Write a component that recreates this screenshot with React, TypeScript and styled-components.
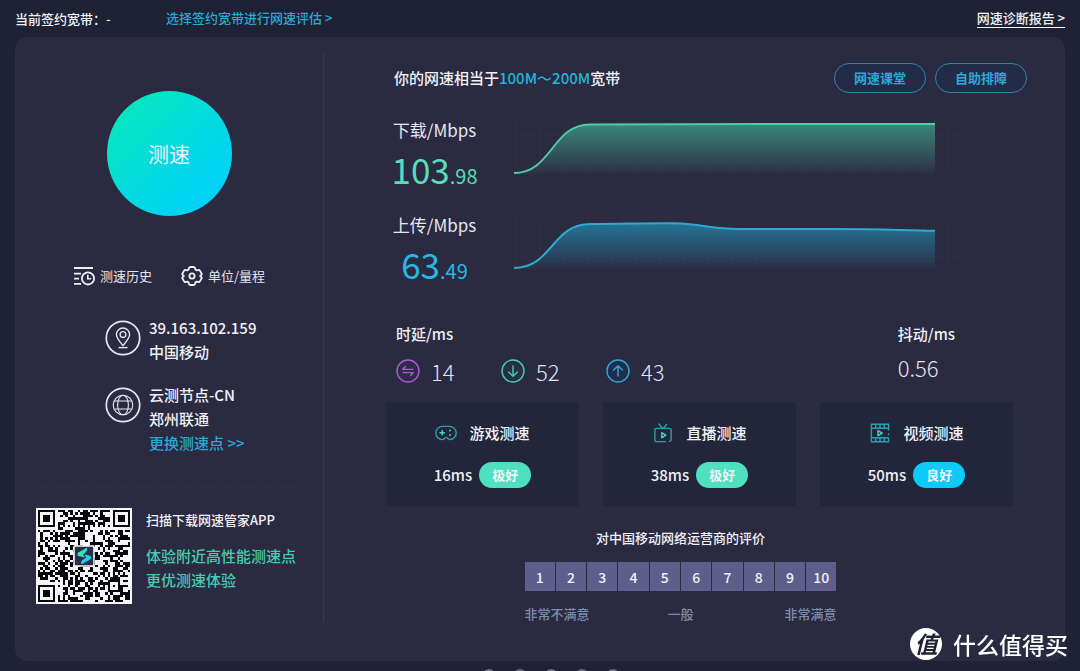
import React from "react";
import styled, { createGlobalStyle } from "styled-components";

const GlobalStyle = createGlobalStyle`
  * { box-sizing: border-box; }
  body {
    margin: 0;
    background: #1e2234;
    color: #f1f2f8;
    font-family: "Noto Sans CJK SC", "Noto Sans", sans-serif;
    font-size: 15px;
    line-height: 24px;
  }
  button, input { font: inherit; color: inherit; }
  a { color: inherit; text-decoration: none; }
  p, h1, h2, h3, fieldset { margin: 0; padding: 0; border: 0; font-size: inherit; font-weight: 400; }
  svg { display: block; flex: none; }
`;

const Page = styled.div`
  display: flex;
  flex-direction: column;
  min-height: 100vh;
`;

const TopBar = styled.header`
  display: flex;
  align-items: center;
  height: 37px;
  padding: 0 15px;
  font-size: 13px;
  font-weight: 500;
`;

const Contract = styled.span`
  width: 151px;
`;

const TopLink = styled.a<{ $report?: boolean }>`
  color: ${(p) => (p.$report ? "#f1f2f8" : "#2ba9d6")};
  margin-left: ${(p) => (p.$report ? "auto" : "0")};
  line-height: 18px;
  border-bottom: 1px solid ${(p) => (p.$report ? "#f1f2f8" : "transparent")};
`;

const Panel = styled.main`
  display: flex;
  flex: 1;
  margin: 0 15px;
  border-radius: 12px;
  background: #2a2a41;
`;

const Side = styled.aside`
  display: flex;
  flex-direction: column;
  align-items: center;
  flex: none;
  width: 309px;
  margin: 15px 0 39px;
  padding-top: 39px;
  border-right: 1px solid #37384f;
`;

const StartButton = styled.button`
  width: 125px;
  height: 125px;
  padding: 0 0 2px;
  border: 0;
  border-radius: 50%;
  background: linear-gradient(135deg, #07e4c4 18%, #00d3f4 78%);
  font-size: 21px;
`;

const Tools = styled.div`
  display: flex;
  gap: 29px;
  margin-top: 50px;
`;

const ToolButton = styled.button`
  display: flex;
  align-items: center;
  gap: 5px;
  padding: 0;
  border: 0;
  background: none;
  font-size: 13px;
  line-height: 20px;
  color: #e4e5ee;
`;

const InfoList = styled.div`
  display: flex;
  flex-direction: column;
  align-self: stretch;
  gap: 19px;
  margin-top: 30px;
  padding-left: 90px;
`;

const InfoItem = styled.div`
  display: flex;
  gap: 8px;
  font-weight: 500;
  > svg { margin-top: 4px; }
  p { font-weight: 500; }
`;

const InfoLink = styled.a`
  display: block;
  color: #2ba9d6;
`;

const Divider = styled.hr`
  align-self: stretch;
  margin: 31px 26px 21px 20px;
  border: 0;
  border-top: 1px dashed #323249;
`;

const AppPromo = styled.div`
  display: flex;
  align-self: stretch;
  gap: 14px;
  padding-left: 21px;
  color: #45cdaf;
  p { font-weight: 500; }
`;

const PromoTitle = styled.h2`
  margin-bottom: 12px;
  color: #f1f2f8;
  font-size: 13px;
  font-weight: 500;
`;

const Results = styled.section`
  flex: 1;
  min-width: 0;
  padding: 26px 38px 37px 62px;
`;

const ResultsHead = styled.div`
  display: flex;
  align-items: center;
  gap: 9px;
  padding-left: 8px;
`;

const Summary = styled.h1`
  flex: 1;
  font-weight: 500;
  em { font-style: normal; color: #22b4dc; }
`;

const OutlineButton = styled.button`
  width: 92px;
  height: 30px;
  padding: 0;
  border: 1px solid #2f86ab;
  border-radius: 15px;
  background: #222c47;
  color: #2fa8d8;
  font-size: 13px;
  font-weight: 700;
  line-height: 20px;
`;

const Speeds = styled.div`
  display: flex;
  flex-direction: column;
  gap: 24px;
  margin: 25px 64px 0 0;
`;

const SpeedRow = styled.div`
  display: flex;
  gap: 31px;
`;

const Speed = styled.div`
  width: 97px;
  text-align: center;
  h3 { font-size: 17px; color: #e6e7f0; }
`;

const SpeedValue = styled.p<{ $color: string }>`
  margin-top: 7px;
  color: ${(p) => p.$color};
  font-size: 35px;
  line-height: 40px;
  small { font-size: 20px; line-height: 20px; }
`;

const ChartBox = styled.div`
  flex: 1;
  min-width: 0;
  padding-top: 4px;
  svg { width: 100%; height: 53px; }
`;

const Stats = styled.div`
  display: flex;
  justify-content: space-between;
  margin: 38px 14px 0 0;
  padding: 0 58px 0 10px;
`;

const StatTitle = styled.h2`
  font-weight: 500;
`;

const Pings = styled.div`
  display: flex;
  margin-top: 13px;
`;

const Ping = styled.div`
  display: flex;
  align-items: center;
  gap: 11px;
  width: 105px;
`;

const BigNumber = styled.span`
  color: #e2e4f2;
  font-size: 22px;
  font-weight: 300;
`;

const Jitter = styled.p`
  margin-top: 9px;
`;

const Cards = styled.div`
  display: grid;
  grid-template-columns: repeat(3, 1fr);
  gap: 24px;
  margin: 19px 14px 0 0;
`;

const Card = styled.article`
  display: flex;
  flex-direction: column;
  align-items: center;
  gap: 17px;
  padding: 19px 0 18px;
  border-radius: 2px;
  background: #22263a;
`;

const CardTitle = styled.h3`
  display: flex;
  align-items: center;
  gap: 12px;
  font-weight: 500;
`;

const CardResult = styled.p`
  display: flex;
  align-items: center;
  gap: 7px;
  font-weight: 500;
`;

const Badge = styled.span<{ $good?: boolean }>`
  width: 52px;
  border-radius: 13px;
  background: ${(p) => (p.$good ? "#0ccaf9" : "#4fe0c0")};
  font-size: 13px;
  font-weight: 700;
  line-height: 26px;
  text-align: center;
`;

const Rating = styled.fieldset`
  width: 312px;
  margin: 22px auto 0;
  font-size: 13px;
  line-height: 20px;
`;

const RatingWrap = styled.div`
  padding-right: 52px;
`;

const RatingTitle = styled.legend`
  width: 100%;
  padding: 0;
  text-align: center;
  font-weight: 500;
`;

const Scale = styled.div`
  display: grid;
  grid-template-columns: repeat(10, 1fr);
  gap: 1px;
  margin-top: 14px;
`;

const Score = styled.button`
  height: 29px;
  padding: 0;
  border: 0;
  background: #5d5e8a;
  font-size: 14px;
  font-weight: 500;
`;

const ScaleLabels = styled.div`
  display: grid;
  grid-template-columns: 1fr auto 1fr;
  margin-top: 13px;
  color: #7c8cab;
  font-weight: 500;
  span:last-child { text-align: right; }
`;

const Footer = styled.footer`
  display: flex;
  justify-content: center;
  gap: 17px;
  height: 10px;
  padding: 8px 0 0 22px;
  overflow: hidden;
`;

const Dot = styled.span`
  width: 14px;
  height: 14px;
  border-radius: 50%;
  background: #686b7c;
`;

const Brand = styled.div`
  position: fixed;
  right: 12px;
  bottom: 11px;
  display: flex;
  align-items: center;
  gap: 11px;
  color: #fff;
  font-size: 23px;
  font-weight: 500;
  line-height: 32px;
`;

const BrandMark = styled.span`
  width: 32px;
  height: 32px;
  border-radius: 50%;
  background: #fff;
  color: #1f2030;
  font-weight: 700;
  font-style: italic;
  line-height: 30px;
  text-align: center;
`;

const HistoryIcon = () => (
  <svg width="22" height="20" viewBox="0 0 22 20" fill="none" stroke="#eeeef5" strokeWidth="1.8">
    <path d="M1 2H20M1 7.6H8M1 12.6H6M1 17.8H8" />
    <circle cx="15" cy="12.4" r="6.1" />
    <path d="M14.8 8.8V12.8H18.2" strokeWidth="1.6" />
  </svg>
);

const GearIcon = () => (
  <svg width="22" height="20" viewBox="0 0 22 20" fill="none" stroke="#eeeef5" strokeWidth="1.8" strokeLinejoin="round">
    <path d="M8.3 1.3L9.2 1H12.8L13.7 1.3L14.4 3.6L15.8 4.4L18.2 3.9L18.9 4.6L20.7 7.7L20.8 8.4L19.1 10L20.8 11.6L20.7 12.3L18.9 15.4L18.2 16.1L15.8 15.6L14.4 16.4L13.7 18.7L12.8 19H9.2L8.3 18.7L7.6 16.4L6.2 15.6L3.8 16.1L3.1 15.4L1.3 12.3L1.2 11.6L2.9 10L1.2 8.4L1.3 7.7L3.1 4.6L3.8 3.9L6.2 4.4L7.6 3.6Z" />
    <circle cx="11" cy="10" r="2.6" />
  </svg>
);

const PinIcon = () => (
  <svg width="36" height="36" viewBox="0 0 36 36" fill="none" stroke="#e6e7f2">
    <circle cx="18" cy="18" r="16.7" strokeWidth="1.7" />
    <path d="M18 25.6C14.8 21.8 11.4 18.2 11.4 14.6A6.6 6.6 0 0 1 24.6 14.6C24.6 18.2 21.2 21.8 18 25.6Z" strokeWidth="1.3" />
    <circle cx="18" cy="14.6" r="2.9" strokeWidth="1.3" />
    <path d="M13.5 27.6H22.5" strokeWidth="1.4" />
  </svg>
);

const GlobeIcon = () => (
  <svg width="36" height="36" viewBox="0 0 36 36" fill="none" stroke="#e6e7f2">
    <circle cx="18" cy="18" r="16.7" strokeWidth="1.7" />
    <g strokeWidth="1.1">
      <circle cx="18" cy="18" r="9.8" />
      <ellipse cx="18" cy="18" rx="5.4" ry="9.8" />
      <path d="M9.4 14H26.6M9.4 22H26.6" />
    </g>
  </svg>
);

const QR_SIZE = 37;

const marker = (x: number, y: number, cx: number, cy: number, outer: number) => {
  const d = Math.max(Math.abs(x - cx), Math.abs(y - cy));
  if (d > outer) return null;
  return outer === 4 ? d === 3 || d <= 1 : d !== 1;
};

const qrPath = () => {
  let seed = 77123;
  let path = "";
  for (let y = 0; y < QR_SIZE; y++) {
    for (let x = 0; x < QR_SIZE; x++) {
      seed ^= seed << 13;
      seed ^= seed >>> 17;
      seed ^= seed << 5;
      const fixed =
        marker(x, y, 3, 3, 4) ??
        marker(x, y, 33, 3, 4) ??
        marker(x, y, 3, 33, 4) ??
        marker(x, y, 30, 30, 2);
      const timing = x === 6 || y === 6 ? (x + y) % 2 === 0 : null;
      if (fixed ?? timing ?? (seed >>> 8) % 100 < 52) path += `M${x} ${y}h1v1h-1z`;
    }
  }
  return path;
};

const QrCode = () => (
  <svg width="96" height="96" viewBox="-0.8 -0.8 38.6 38.6" role="img" aria-label="QR">
    <rect x="-0.8" y="-0.8" width="38.6" height="38.6" fill="#f6f6f8" />
    <path d={qrPath()} fill="#08080c" shapeRendering="crispEdges" />
    <rect x="14.2" y="14.2" width="8.6" height="8.6" rx="0.6" fill="#f6f6f8" />
    <rect x="14.8" y="14.8" width="7.4" height="7.4" rx="0.4" fill="#2a3046" />
    <path d="M19.6 15.2L16.4 17C15.5 17.6 15.7 18.4 16.6 18.6L19 19.1L18 18L19.2 17C19.9 16.4 19.9 15.8 19.6 15.2Z" fill="#2fe0c4" />
    <path d="M17.6 21.8L20.8 20C21.7 19.4 21.5 18.5 20.6 18.3L18.6 17.9L19.4 19.2L17.9 20.1C17.2 20.6 17.2 21.3 17.6 21.8Z" fill="#26cdea" />
  </svg>
);

interface ChartProps {
  id: string;
  line: string;
  stroke: string;
  fill: string;
}

const gridX = Array.from({ length: 38 }, (_, i) => i * 12 + 2);
const gridY = [0.5, 13.5, 26.5, 39.5, 52.5];

const Chart = ({ id, line, stroke, fill }: ChartProps) => (
  <ChartBox>
    <svg viewBox="0 0 449 53" preserveAspectRatio="none" fill="none">
      <defs>
        <linearGradient id={id} x1="0" y1="0" x2="0" y2="1">
          <stop offset="0" stopColor={fill} stopOpacity="0.95" />
          <stop offset="1" stopColor={fill} stopOpacity="0.08" />
        </linearGradient>
      </defs>
      <path
        d={gridX.map((x) => `M${x} 0V53`).join("") + gridY.map((y) => `M0 ${y}H449`).join("")}
        stroke="#302f41"
      />
      <path d={`${line}V51H0Z`} fill={`url(#${id})`} />
      <path d={line} stroke={stroke} strokeWidth="2" />
    </svg>
  </ChartBox>
);

const RoundIcon = ({ color, tint, d }: { color: string; tint: string; d: string }) => (
  <svg width="24" height="24" viewBox="0 0 24 24" fill="none" stroke={color} strokeWidth="1.4" strokeLinejoin="round" strokeLinecap="round">
    <circle cx="12" cy="12" r="11" fill={tint} />
    <path d={d} />
  </svg>
);

const GameIcon = () => (
  <svg width="22" height="22" viewBox="0 0 22 22" fill="none" stroke="#2a9fb0" strokeWidth="1.4" strokeLinecap="round">
    <path d="M7.6 17.6H7.2A6.6 6.6 0 0 1 7.6 4.4H14.4A6.6 6.6 0 0 1 14.8 17.6C12.8 17.6 13 15.4 11.2 15.4C9.6 15.4 9.4 17.6 7.6 17.6Z" />
    <path d="M7.2 8.6V12.8M5.1 10.7H9.3" stroke="#44d3c0" strokeWidth="1.5" />
    <path d="M15 8.4V8.5M15 12.9V13" stroke="#44d3c0" strokeWidth="2" />
  </svg>
);

const LiveIcon = () => (
  <svg width="22" height="22" viewBox="0 0 22 22" fill="none" stroke="#2a9fb0" strokeWidth="1.4" strokeLinecap="round" strokeLinejoin="round">
    <path d="M13.5 19.6H4.5A1.6 1.6 0 0 1 2.9 18V8A1.6 1.6 0 0 1 4.5 6.4H17.5A1.6 1.6 0 0 1 19.1 8V18A1.6 1.6 0 0 1 17.5 19.4" />
    <path d="M10.2 6.2L7 2M11.6 6.2L14.6 2.4" />
    <path d="M9.8 10.6V15.8L13.8 13.2Z" stroke="#44d3c0" />
  </svg>
);

const VideoIcon = () => (
  <svg width="22" height="22" viewBox="0 0 22 22" fill="none" stroke="#2a9fb0" strokeWidth="1.4" strokeLinejoin="round">
    <path d="M19.6 8.6V2.2H2.4V19.8H19.6V15.8M19.6 11.2V13.2" />
    <path d="M2.4 6.2H19.6M2.4 15.8H19.6M6.7 2.4V6.2M11 2.4V6.2M15.3 2.4V6.2M6.7 15.8V19.6M11 15.8V19.6M15.3 15.8V19.6" />
    <path d="M9 8.6V13.6L13.2 11.1Z" stroke="#44d3c0" />
  </svg>
);

const cards = [
  { title: "游戏测速", icon: <GameIcon />, value: "16ms", label: "极好", good: false },
  { title: "直播测速", icon: <LiveIcon />, value: "38ms", label: "极好", good: false },
  { title: "视频测速", icon: <VideoIcon />, value: "50ms", label: "良好", good: true },
];

const pings = [
  { value: 14, color: "#a95fd0", tint: "#32284c", d: "M17 10.4H6.6L9.4 7.6M7 13.6H17.4L14.6 16.4" },
  { value: 52, color: "#4fc9b2", tint: "#233045", d: "M12 7V17M7.6 13L12 17.2L16.4 13" },
  { value: 43, color: "#2fa5d8", tint: "#202e4c", d: "M12 17V7M7.6 11L12 6.8L16.4 11" },
];

export default function App() {
  return (
    <Page>
      <GlobalStyle />
      <TopBar>
        <Contract>当前签约宽带：-</Contract>
        <TopLink href="#plan">选择签约宽带进行网速评估 &gt;</TopLink>
        <TopLink href="#report" $report>网速诊断报告 &gt;</TopLink>
      </TopBar>
      <Panel>
        <Side>
          <StartButton type="button">测速</StartButton>
          <Tools>
            <ToolButton type="button"><HistoryIcon />测速历史</ToolButton>
            <ToolButton type="button"><GearIcon />单位/量程</ToolButton>
          </Tools>
          <InfoList>
            <InfoItem>
              <PinIcon />
              <div>
                <p>39.163.102.159</p>
                <p>中国移动</p>
              </div>
            </InfoItem>
            <InfoItem>
              <GlobeIcon />
              <div>
                <p>云测节点-CN</p>
                <p>郑州联通</p>
                <InfoLink href="#nodes">更换测速点 &gt;&gt;</InfoLink>
              </div>
            </InfoItem>
          </InfoList>
          <Divider />
          <AppPromo>
            <QrCode />
            <div>
              <PromoTitle>扫描下载网速管家APP</PromoTitle>
              <p>体验附近高性能测速点</p>
              <p>更优测速体验</p>
            </div>
          </AppPromo>
        </Side>
        <Results>
          <ResultsHead>
            <Summary>你的网速相当于<em>100M～200M</em>宽带</Summary>
            <OutlineButton type="button">网速课堂</OutlineButton>
            <OutlineButton type="button">自助排障</OutlineButton>
          </ResultsHead>
          <Speeds>
            <SpeedRow>
              <Speed>
                <h3>下载/Mbps</h3>
                <SpeedValue $color="#58dcbb">103<small>.98</small></SpeedValue>
              </Speed>
              <Chart id="down" stroke="#4fcbac" fill="#3c8b7c" line="M0 51C38 51 38 2.5 76 2.5L300 2L421 2" />
            </SpeedRow>
            <SpeedRow>
              <Speed>
                <h3>上传/Mbps</h3>
                <SpeedValue $color="#25b8e6">63<small>.49</small></SpeedValue>
              </Speed>
              <Chart id="up" stroke="#32a8d0" fill="#24789a" line="M0 51C38 51 38 7 76 7C110 7 130 6 160 6.3C190 7 195 12 225 12L320 12C360 12 380 13 421 13.8" />
            </SpeedRow>
          </Speeds>
          <Stats>
            <div>
              <StatTitle>时延/ms</StatTitle>
              <Pings>
                {pings.map((p) => (
                  <Ping key={p.value}>
                    <RoundIcon color={p.color} tint={p.tint} d={p.d} />
                    <BigNumber>{p.value}</BigNumber>
                  </Ping>
                ))}
              </Pings>
            </div>
            <div>
              <StatTitle>抖动/ms</StatTitle>
              <Jitter><BigNumber>0.56</BigNumber></Jitter>
            </div>
          </Stats>
          <Cards>
            {cards.map((c) => (
              <Card key={c.title}>
                <CardTitle>{c.icon}{c.title}</CardTitle>
                <CardResult>{c.value}<Badge $good={c.good}>{c.label}</Badge></CardResult>
              </Card>
            ))}
          </Cards>
          <RatingWrap>
            <Rating>
              <RatingTitle>对中国移动网络运营商的评价</RatingTitle>
              <Scale>
                {Array.from({ length: 10 }, (_, i) => (
                  <Score type="button" key={i}>{i + 1}</Score>
                ))}
              </Scale>
              <ScaleLabels>
                <span>非常不满意</span>
                <span>一般</span>
                <span>非常满意</span>
              </ScaleLabels>
            </Rating>
          </RatingWrap>
        </Results>
      </Panel>
      <Footer>
        <Dot /><Dot /><Dot /><Dot /><Dot />
      </Footer>
      <Brand>
        <BrandMark>值</BrandMark>
        什么值得买
      </Brand>
    </Page>
  );
}
